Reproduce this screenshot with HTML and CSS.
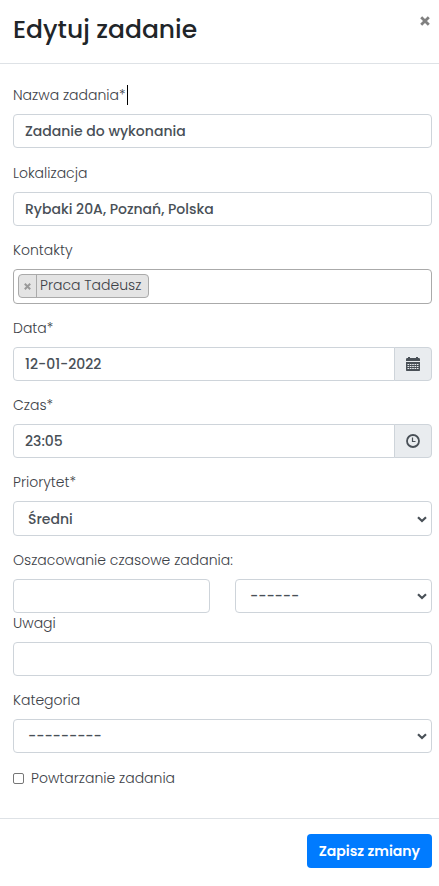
FILE: index.html
```html
<!DOCTYPE html>
<html lang="pl">
<head>
<meta charset="utf-8">
<meta name="viewport" content="width=device-width, initial-scale=1">
<title>Edytuj zadanie</title>
<link rel="stylesheet" href="styles.css">
</head>
<body>
<form class="modal">
  <header class="modal-header">
    <h1 class="title">Edytuj zadanie</h1>
    <button class="close" type="button" aria-label="Zamknij">
      <svg width="10" height="10" viewBox="0 0 10 10"><path d="M1.2 1.2 8.8 8.8M8.8 1.2 1.2 8.8" fill="none" stroke="currentColor" stroke-width="2.8"/></svg>
    </button>
  </header>
  <main class="modal-body">
    <div class="group">
      <label class="label" for="name">Nazwa zadania*<span class="caret"></span></label>
      <input class="control" id="name" type="text" value="Zadanie do wykonania">
    </div>
    <div class="group">
      <label class="label" for="place">Lokalizacja</label>
      <input class="control" id="place" type="text" value="Rybaki 20A, Poznań, Polska">
    </div>
    <div class="group">
      <label class="label" for="contacts">Kontakty</label>
      <div class="tags">
        <span class="tag"><button class="tag-remove" type="button" aria-label="Usuń"><svg width="7" height="7" viewBox="0 0 7 7"><path d="M.8 .8 6.2 6.2M6.2 .8 .8 6.2" fill="none" stroke="currentColor" stroke-width="2"/></svg></button><span class="tag-text">Praca Tadeusz</span></span>
        <input class="tags-input" id="contacts" type="text">
      </div>
    </div>
    <div class="group">
      <label class="label" for="date">Data*</label>
      <div class="input-group">
        <input class="control" id="date" type="text" value="12-01-2022">
        <button class="addon" type="button" aria-label="Wybierz datę">
          <svg width="14" height="14" viewBox="0 0 14 14" fill="currentColor"><path d="M0 2.200Q0 1 1.200 1H2V0h2v1h6V0h2v1h.8Q14 1 14 2.200V4H0zM0 5h14v8.300q0 .7-.7.700H.7q-.7 0-.7-.7z"/><path d="M1.500 7.500h11M1.500 9.500h11M1.500 11.500h11" stroke="#e9ecef" stroke-width="1" stroke-dasharray="1.600 .75"/></svg>
        </button>
      </div>
    </div>
    <div class="group">
      <label class="label" for="time">Czas*</label>
      <div class="input-group">
        <input class="control" id="time" type="text" value="23:05">
        <button class="addon" type="button" aria-label="Wybierz czas">
          <svg width="14" height="14" viewBox="0 0 14 14" fill="none" stroke="currentColor"><circle cx="7" cy="7" r="6" stroke-width="1.800"/><path d="M6.500 3.500v4h3" stroke-width="1.200"/></svg>
        </button>
      </div>
    </div>
    <div class="group">
      <label class="label" for="priority">Priorytet*</label>
      <div class="select select-tall">
        <select class="control" id="priority"><option>Średni</option></select>
        <svg class="chevron" width="10" height="7" viewBox="0 0 10 7"><path d="M1 1.200 5 5l4-3.800" fill="none" stroke="currentColor" stroke-width="2.200"/></svg>
      </div>
    </div>
    <div class="group group-tight">
      <label class="label" for="estimate">Oszacowanie czasowe zadania:</label>
      <div class="columns">
        <input class="control" id="estimate" type="text">
        <div class="select">
          <select class="control" aria-label="Jednostka"><option>------</option></select>
          <svg class="chevron" width="10" height="7" viewBox="0 0 10 7"><path d="M1 1.200 5 5l4-3.800" fill="none" stroke="currentColor" stroke-width="2.200"/></svg>
        </div>
      </div>
    </div>
    <div class="group">
      <label class="label" for="notes">Uwagi</label>
      <input class="control" id="notes" type="text">
    </div>
    <div class="group">
      <label class="label" for="category">Kategoria</label>
      <div class="select">
        <select class="control" id="category"><option>---------</option></select>
        <svg class="chevron" width="10" height="7" viewBox="0 0 10 7"><path d="M1 1.200 5 5l4-3.800" fill="none" stroke="currentColor" stroke-width="2.200"/></svg>
      </div>
    </div>
    <div class="check">
      <input class="checkbox" id="repeat" type="checkbox">
      <label for="repeat">Powtarzanie zadania</label>
    </div>
  </main>
  <footer class="modal-footer">
    <button class="save" type="submit">Zapisz zmiany</button>
  </footer>
</form>
</body>
</html>
```
FILE: styles.css
```css
* { box-sizing: border-box; }

body {
  margin: 0;
  background: #fff;
  color: #3c4147;
  font: 300 14px/20px Poppins, Inter, "Open Sans", sans-serif;
}

input, select, button { font: inherit; color: inherit; }

.modal-header {
  display: flex;
  justify-content: space-between;
  align-items: flex-start;
  padding: 12px 9px 15px 13px;
  border-bottom: 1px solid #dee2e6;
}

.title {
  margin: 0;
  color: #212529;
  font-size: 25px;
  font-weight: 500;
  line-height: 36px;
}

.close {
  display: flex;
  margin: 4px 0 0;
  padding: 0;
  border: 0;
  background: none;
  color: #808080;
}

.modal-body { padding: 21px 7px 30px 13px; }

.group { margin-bottom: 14px; }
.group:first-child { margin-bottom: 15px; }
.group-tight { margin-bottom: 0; }

.label {
  display: flex;
  margin-bottom: 9px;
}

.caret {
  width: 1px;
  margin-left: 1px;
  background: #000;
}

.control {
  display: block;
  width: 100%;
  min-width: 0;
  height: 34px;
  padding: 0 11px;
  border: 1px solid #ced4da;
  border-radius: 4px;
  background: #fff;
  color: #495057;
  font-weight: 500;
}

.tags {
  display: flex;
  align-items: flex-start;
  height: 35px;
  padding: 4px;
  border: 1px solid #aaa;
  border-radius: 4px;
}

.tag {
  display: flex;
  flex: none;
  height: 24px;
  border: 1px solid #aaa;
  border-radius: 4px;
  background: #e4e4e4;
}

.tag-remove {
  display: flex;
  align-items: center;
  justify-content: center;
  width: 18px;
  padding: 0;
  border: 0;
  border-right: 1px solid #aaa;
  background: none;
  color: #999;
}

.tag-text {
  padding: 0 7px 0 3px;
  line-height: 20px;
}

.tags-input {
  flex: 1;
  min-width: 0;
  border: 0;
  background: none;
  outline: 0;
}

.input-group { display: flex; }

.input-group .control {
  flex: 1;
  border-radius: 4px 0 0 4px;
}

.addon {
  display: flex;
  align-items: center;
  justify-content: center;
  width: 38px;
  margin-left: -1px;
  padding: 0;
  border: 1px solid #ced4da;
  border-radius: 0 4px 4px 0;
  background: #e9ecef;
  color: #495057;
}

.select { position: relative; }

.select .control {
  padding: 0 24px 0 14px;
  appearance: none;
}

.select-tall .control { height: 35px; }

.chevron {
  position: absolute;
  top: 50%;
  right: 5px;
  margin-top: -3px;
  color: #495057;
  pointer-events: none;
}

.columns {
  display: grid;
  grid-template-columns: 1fr 1fr;
  gap: 25px;
}

.check {
  display: flex;
  align-items: center;
  gap: 7px;
  padding-top: 1px;
}

.checkbox {
  appearance: none;
  width: 11px;
  height: 11px;
  margin: 0;
  border: 1px solid #767676;
  border-radius: 2px;
  background: #fff;
}

.modal-footer {
  display: flex;
  justify-content: flex-end;
  padding: 15px 7px;
  border-top: 1px solid #dee2e6;
}

.save {
  height: 34px;
  padding: 0 12px;
  border: 0;
  border-radius: 4px;
  background: #007bff;
  color: #fff;
  font-weight: 600;
}
```
